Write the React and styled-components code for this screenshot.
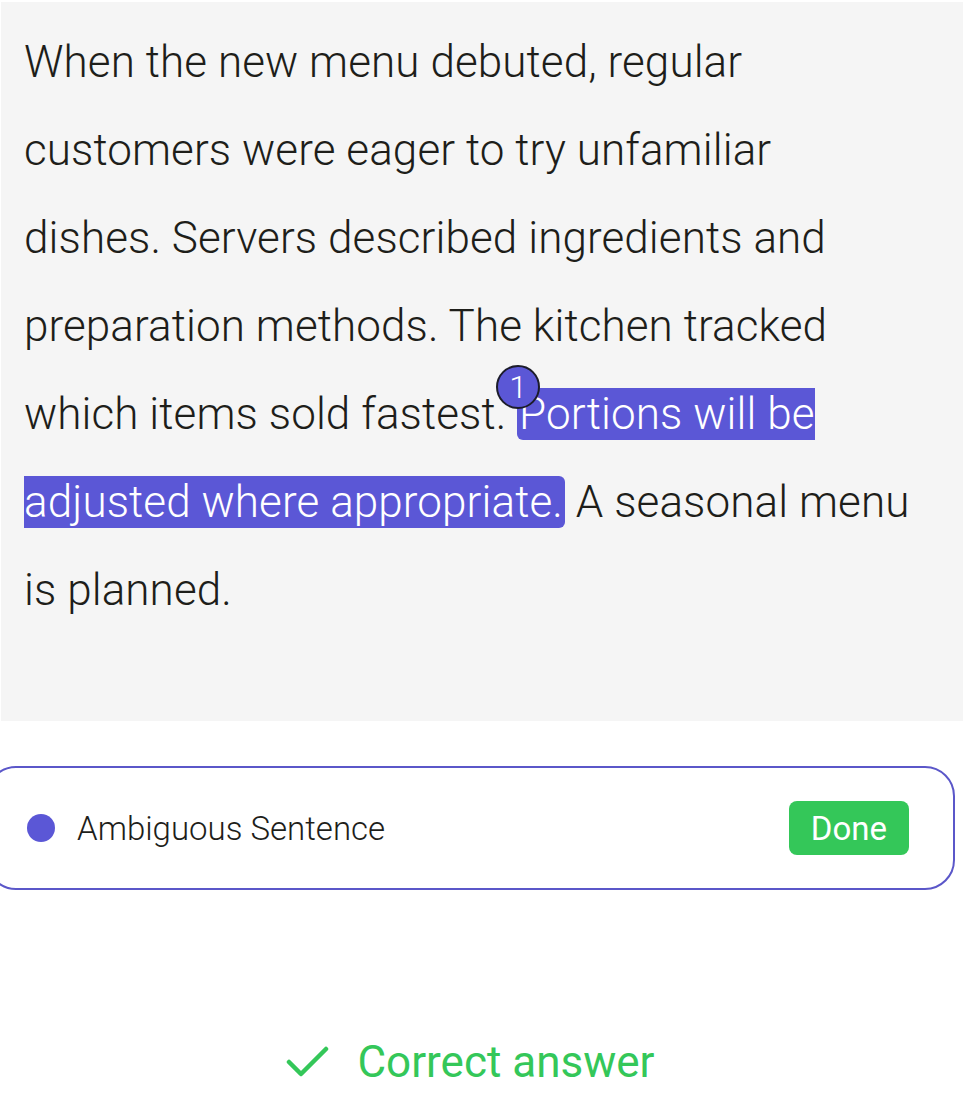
import React from 'react';
import styled, { createGlobalStyle } from 'styled-components';

const GlobalStyle = createGlobalStyle`
  html, body {
    margin: 0;
    padding: 0;
    background: #ffffff;
    overflow: hidden;
  }
  body {
    font-family: Roboto, "Liberation Sans", sans-serif;
  }
`;

const Page = styled.div`
  padding: 2px 2px 0 1px;
  display: flex;
  flex-direction: column;
`;

const Passage = styled.div`
  background: #f5f5f5;
  padding: 16px 51px 87px 23px;
  font-size: 44px;
  font-weight: 300;
  line-height: 88px;
  letter-spacing: 0.09px;
  color: #1e1e1a;
`;

const Highlight = styled.span`
  position: relative;
  background: #5b57d6;
  color: #ffffff;
  border-radius: 6px;
  padding: 0 2px;
  letter-spacing: 0.1px;
`;

const Badge = styled.span`
  position: absolute;
  top: -23px;
  left: -21px;
  width: 40px;
  height: 40px;
  border-radius: 50%;
  background: #5b57d6;
  border: 2px solid #1c1c2a;
  color: #ffffff;
  font-size: 32px;
  font-weight: 300;
  line-height: 40px;
  letter-spacing: 0;
  text-align: center;
`;

const Card = styled.div`
  margin: 45px 8px 0 -15px;
  height: 124px;
  box-sizing: border-box;
  border: 2px solid #5b57c9;
  border-radius: 30px;
  display: flex;
  align-items: center;
  padding: 0 44px 0 39px;
`;

const Dot = styled.span`
  width: 28px;
  height: 28px;
  border-radius: 50%;
  background: #5b57d6;
  flex-shrink: 0;
`;

const Label = styled.span`
  margin-left: 22px;
  font-size: 33px;
  font-weight: 300;
  color: #1e1e1a;
  flex: 1;
`;

const DoneButton = styled.button`
  background: #34c759;
  color: #ffffff;
  border: none;
  border-radius: 8px;
  height: 54px;
  padding: 0 22px;
  font-family: Roboto, "Liberation Sans", sans-serif;
  font-size: 33px;
  font-weight: 400;
`;

const Result = styled.div`
  margin-top: 146px;
  display: flex;
  align-items: center;
  justify-content: center;
  gap: 28px;
  padding-right: 24px;
  color: #34c759;
  font-size: 44px;
  font-weight: 400;
`;

const CheckIcon = () => (
  <svg width="44" height="34" viewBox="0 0 44 34" fill="none">
    <path
      d="M4 17 L16 29 L41 4"
      stroke="#34c759"
      strokeWidth="4.5"
      strokeLinecap="round"
      strokeLinejoin="round"
    />
  </svg>
);

export default function App() {
  return (
    <>
      <GlobalStyle />
      <Page>
        <Passage>
          When the new menu debuted, regular customers were eager to try
          unfamiliar dishes. Servers described ingredients and preparation
          methods. The kitchen tracked which items sold fastest.{' '}
          <Highlight>
            <Badge>1</Badge>Portions will be adjusted where appropriate.
          </Highlight>{' '}
          A seasonal menu is planned.
        </Passage>
        <Card>
          <Dot />
          <Label>Ambiguous Sentence</Label>
          <DoneButton>Done</DoneButton>
        </Card>
        <Result>
          <CheckIcon />
          <span>Correct answer</span>
        </Result>
      </Page>
    </>
  );
}
